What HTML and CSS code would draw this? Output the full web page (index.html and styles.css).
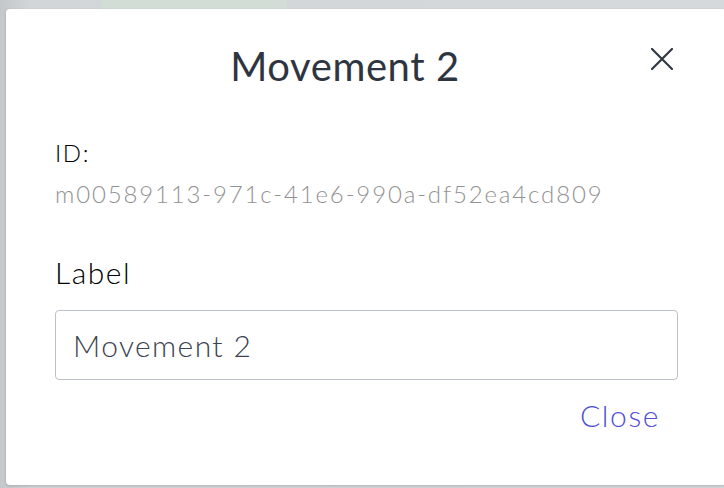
FILE: index.html
```html
<!DOCTYPE html>
<html>
<head>
<meta charset="utf-8">
<link rel="stylesheet" href="styles.css">
</head>
<body>
<div class="backdrop">
  <div class="bg-strip"><span class="bg-green"></span></div>
  <div class="modal">
    <div class="header">
      <h1 class="title">Movement 2</h1>
      <button class="close-x" aria-label="Close">
        <svg width="22" height="22" viewBox="0 0 22 22"><path d="M1 1L21 21M21 1L1 21" stroke="#323944" stroke-width="2.2" stroke-linecap="square" fill="none"/></svg>
      </button>
    </div>
    <div class="field">
      <div class="label">ID:</div>
      <div class="id-value">m00589113-971c-41e6-990a-df52ea4cd809</div>
    </div>
    <div class="field field-label">
      <div class="label label-big">Label</div>
      <input class="input" type="text" value="Movement 2">
    </div>
    <div class="footer">
      <a class="close-link">Close</a>
    </div>
  </div>
</div>
</body>
</html>
```
FILE: styles.css
```css
html, body {
  margin: 0;
  padding: 0;
  width: 724px;
  height: 488px;
  overflow: hidden;
  background: #cdd1d4;
  font-family: Lato, "Noto Sans", sans-serif;
}
.backdrop {
  position: relative;
  width: 724px;
  height: 488px;
  background: linear-gradient(90deg, #c4c8cb 0px, #d2d6d9 30px, #d6d9dc 100%);
  overflow: hidden;
}
.bg-strip {
  position: absolute;
  left: 0;
  top: 0;
  width: 724px;
  height: 9px;
}
.bg-green {
  position: absolute;
  left: 101px;
  top: 0;
  width: 186px;
  height: 9px;
  background: #d2ddd5;
}
.modal {
  position: absolute;
  left: 6px;
  top: 9px;
  width: 720px;
  height: 476px;
  background: #fff;
  border-radius: 4px;
  box-shadow: 0 1px 3px rgba(0,0,0,0.18);
  box-sizing: border-box;
  padding: 0 47px 0 49px;
}
.header {
  display: flex;
  align-items: flex-start;
  padding-top: 33px;
}
.title {
  flex: 1;
  margin: 0;
  text-align: center;
  font-size: 40px;
  font-weight: 400;
  color: #2e3540;
  line-height: 48px;
  letter-spacing: 0.6px;
}
.close-x {
  width: 44px;
  height: 30px;
  border: 0;
  background: none;
  padding: 0 6px 0 0;
  margin-top: 6px;
  display: flex;
  justify-content: flex-end;
  align-items: flex-start;
}
.field {
  margin-top: 48px;
}
.label {
  font-size: 24px;
  color: #000;
  line-height: 30px;
  font-weight: 300;
  letter-spacing: 1.6px;
}
.id-value {
  font-size: 24px;
  color: #929292;
  line-height: 30px;
  margin-top: 11px;
  font-weight: 300;
  letter-spacing: 1.85px;
}
.field-label {
  margin-top: 45px;
}
.label-big {
  font-size: 30px;
  line-height: 36px;
  letter-spacing: 1.5px;
}
.input {
  display: block;
  box-sizing: border-box;
  width: 623px;
  height: 70px;
  margin-top: 20px;
  border: 1.5px solid #bcc0c8;
  border-radius: 4px;
  padding: 0 17px;
  font-family: Lato, "Noto Sans", sans-serif;
  font-size: 30px;
  font-weight: 300;
  letter-spacing: 1.4px;
  color: #3c4350;
  outline: none;
}
.footer {
  display: flex;
  justify-content: flex-end;
  padding-right: 19px;
  margin-top: 17px;
}
.close-link {
  font-size: 30px;
  font-weight: 300;
  letter-spacing: 1.6px;
  color: #4f4fd6;
  line-height: 36px;
  cursor: pointer;
}
```
